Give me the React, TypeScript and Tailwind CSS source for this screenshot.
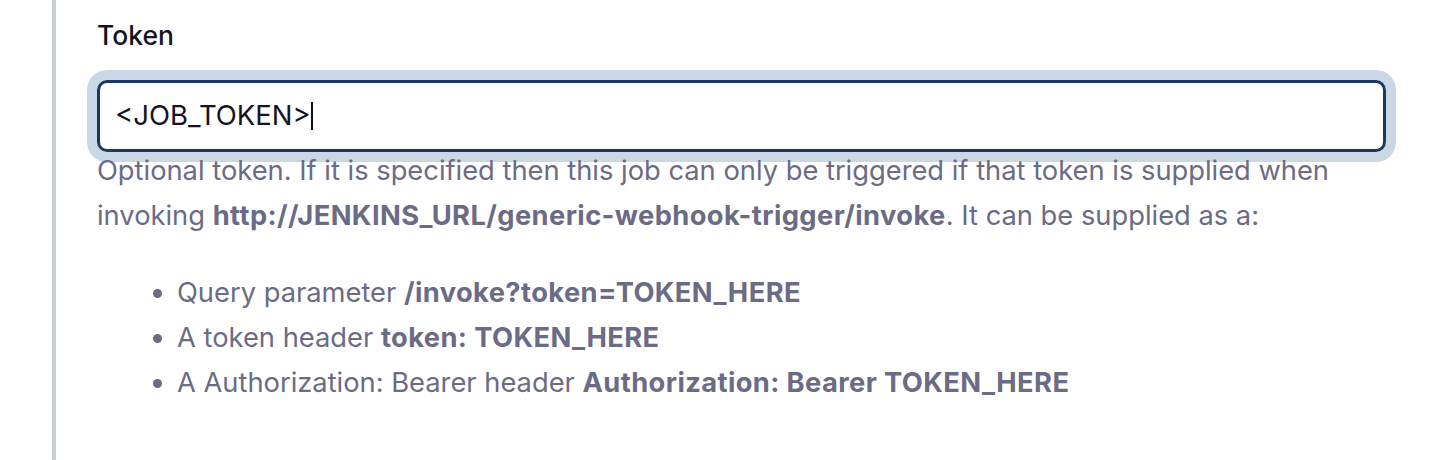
import React from "react";

export default function App() {
  return (
    <div className="flex h-[460px] w-[1432px] bg-white overflow-hidden" style={{ fontFamily: "Inter, 'Noto Sans', sans-serif" }}>
      <div className="w-[52px] shrink-0" />
      <div className="flex-1 border-l-4 border-[#c8d0d4] pl-[41px] pr-[46px] pt-[16px]">
        <div className="text-[26.5px] leading-[38px] font-medium text-[#14141f]">Token</div>
        <div className="mt-[26px] h-[72px] rounded-[10px] border-[3px] border-[#1d3a5c] shadow-[0_0_0_10px_#cad8e6] flex items-center pl-[15px] text-[27.5px] text-[#14141f]">
          <span>&lt;JOB_TOKEN&gt;</span>
          <span className="inline-block h-[28px] w-[2px] bg-[#111]" />
        </div>
        <div className="-mt-[4px] text-[27.3px] leading-[45px] text-[#6b6b85]">
          <p>
            Optional token. If it is specified then this job can only be triggered if that token is supplied when invoking{" "}
            <b className="font-bold tracking-[0.4px]">http://JENKINS_URL/generic-webhook-trigger/invoke</b>. It can be supplied as a:
          </p>
          <ul className="mt-[32px] pl-[80px] list-disc">
            <li>Query parameter <b className="font-bold tracking-[0.4px]">/invoke?token=TOKEN_HERE</b></li>
            <li>A token header <b className="font-bold tracking-[0.4px]">token: TOKEN_HERE</b></li>
            <li>A Authorization: Bearer header <b className="font-bold tracking-[0.4px]">Authorization: Bearer TOKEN_HERE</b></li>
          </ul>
        </div>
      </div>
    </div>
  );
}
